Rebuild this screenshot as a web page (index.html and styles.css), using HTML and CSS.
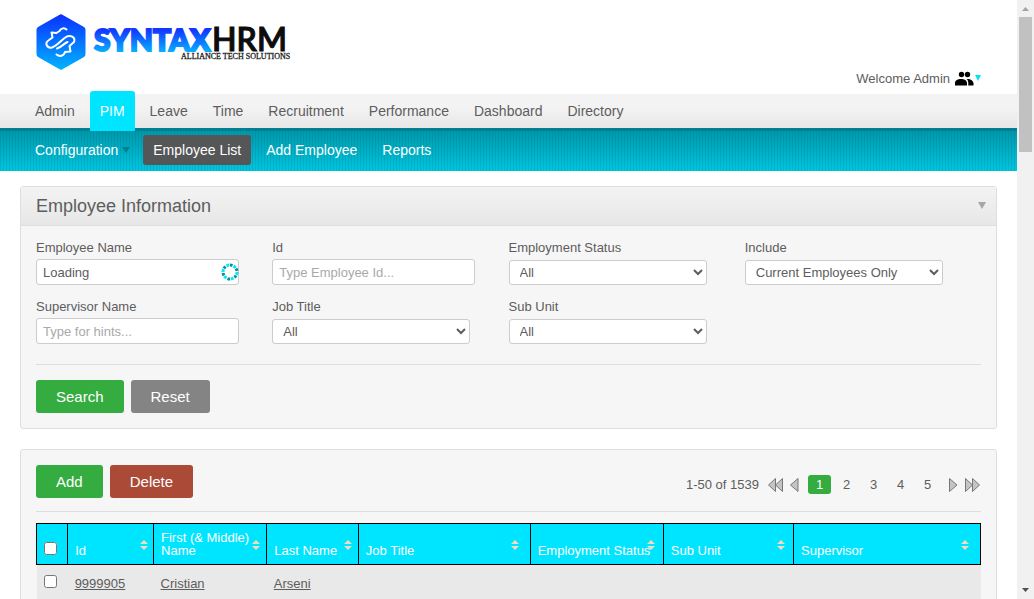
FILE: index.html
```html
<!DOCTYPE html>
<html lang="en">
<head>
<meta charset="utf-8">
<title>SyntaxHRM</title>
<link rel="stylesheet" href="styles.css">
</head>
<body>
<div class="page">
  <header class="branding">
    <svg class="logo" width="260" height="62" viewBox="0 0 260 62" role="img" aria-label="SyntaxHRM">
      <defs>
        <linearGradient id="mark" x1="0" y1="0" x2="0" y2="1"><stop offset="0" stop-color="#0a30ff"/><stop offset="1" stop-color="#00b4ff"/></linearGradient>
        <linearGradient id="word" x1="0" y1="20" x2="0" y2="42" gradientUnits="userSpaceOnUse"><stop offset="0" stop-color="#1238ff"/><stop offset="1" stop-color="#08b0ff"/></linearGradient>
      </defs>
      <path fill="url(#mark)" d="M25 4 48 17Q49.500 18 49.500 20V44Q49.500 46 48 47L26 59.500Q25 60 24 59.500L2 47Q.5 46 .5 44V20Q.5 18 2 17L24 4.500Q25 4 26 4.500Z"/>
      <path fill="none" stroke="#fff" stroke-width="2" stroke-linecap="round" stroke-linejoin="round" d="M30.500 19.500C28.500 17.500 25 18 23.500 21L20.500 23 15.500 22.500 16.500 27.500 13 30C8 33 11 38.500 16 37.500C21 36 26 29.500 30 27C34 24.500 40 27 38 32L33.500 36 34.500 41.500 29 42C28 46 23.500 47 20.500 44.500M21 38.500C25 37.500 28 33.500 31.500 32"/>
      <text class="logo-word" x="58" y="41" fill="url(#word)" stroke="url(#word)">SYNTAX</text>
      <text class="logo-hrm" x="176" y="41">HRM</text>
      <text class="logo-tag" x="145" y="49">ALLIANCE TECH SOLUTIONS</text>
    </svg>
    <button class="welcome" type="button">Welcome Admin
      <svg width="26" height="16" viewBox="0 0 26 16" aria-hidden="true"><circle cx="6.500" cy="3.500" r="2.700"/><circle cx="12.500" cy="3.500" r="2.700"/><path d="M0 14.500V12C0 6.500 12 6.500 12 12V14.500ZM13.300 14.500V12C13.300 10.500 12.800 9 11.500 8 15 7.500 18.500 9.500 18.500 12.500V14.500Z"/><path fill="#00e5ff" d="M20 4H26L23 10Z"/></svg>
    </button>
  </header>
  <nav class="menu">
    <a href="#">Admin</a><a href="#" class="current">PIM</a><a href="#">Leave</a><a href="#">Time</a><a href="#">Recruitment</a><a href="#">Performance</a><a href="#">Dashboard</a><a href="#">Directory</a>
  </nav>
  <nav class="submenu">
    <a href="#" class="has-arrow">Configuration<svg width="8" height="6" aria-hidden="true"><path fill="#007f90" d="M0 0H8L4 6Z"/></svg></a><a href="#" class="selected">Employee List</a><a href="#">Add Employee</a><a href="#">Reports</a>
  </nav>
  <main class="content">
    <section class="panel">
      <div class="panel-head"><h1>Employee Information</h1><button class="toggle" type="button" aria-label="Collapse"><svg width="8" height="7"><path fill="#a6a6a6" d="M0 0H8L4 7Z"/></svg></button></div>
      <form class="panel-body">
        <div class="fields">
          <div class="field"><label for="name">Employee Name</label>
            <div class="loading"><input id="name" type="text" value="Loading">
              <svg class="spinner" width="18" height="18" viewBox="0 0 18 18" fill="none" stroke-width="3" aria-hidden="true"><circle cx="9" cy="9" r="7" stroke="#08e5f5" pathLength="120" stroke-dasharray="8 12"/><circle cx="9" cy="9" r="7" stroke="#078e9c" pathLength="120" stroke-dasharray="7 13" stroke-dashoffset="10"/></svg></div></div>
          <div class="field"><label for="empid">Id</label><input id="empid" type="text" placeholder="Type Employee Id..."></div>
          <div class="field"><label for="status">Employment Status</label><select id="status"><option>All</option></select></div>
          <div class="field"><label for="include">Include</label><select id="include"><option>Current Employees Only</option></select></div>
          <div class="field"><label for="supervisor">Supervisor Name</label><input id="supervisor" type="text" placeholder="Type for hints..."></div>
          <div class="field"><label for="title">Job Title</label><select id="title"><option>All</option></select></div>
          <div class="field"><label for="unit">Sub Unit</label><select id="unit"><option>All</option></select></div>
        </div>
        <div class="actions divided"><button class="btn green" type="button">Search</button><button class="btn gray" type="reset">Reset</button></div>
      </form>
    </section>
    <section class="panel panel-body">
      <div class="toolbar">
        <div class="actions"><button class="btn green" type="button">Add</button><button class="btn red" type="button">Delete</button></div>
        <nav class="paging" aria-label="Pages">
          <span>1-50 of 1539</span>
          <a href="#" class="first" aria-label="First"><svg width="15" height="14"><path d="M7.500 .5V13.500L.5 7ZM14.500 .5V13.500L7.500 7Z"/></svg></a>
          <a href="#" class="prev" aria-label="Previous"><svg width="9" height="14"><path d="M8 .5V13.500L.5 7Z"/></svg></a>
          <a href="#" class="num on">1</a><a href="#" class="num">2</a><a href="#" class="num">3</a><a href="#" class="num">4</a><a href="#" class="num">5</a>
          <a href="#" class="next" aria-label="Next"><svg width="9" height="14"><path d="M.5 .5V13.500L8 7Z"/></svg></a>
          <a href="#" class="last" aria-label="Last"><svg width="15" height="14"><path d="M.5 .5V13.500L7.500 7ZM7.500 .5V13.500L14.500 7Z"/></svg></a>
        </nav>
      </div>
      <table class="list">
        <colgroup><col class="c-check"><col class="c-id"><col class="c-first"><col class="c-last"><col class="c-job"><col class="c-status"><col class="c-unit"><col></colgroup>
        <thead><tr>
          <th class="check"><input type="checkbox" aria-label="Select all"></th>
          <th>Id<svg class="sort" width="8" height="10"><path d="M0 4 4 0 8 4ZM0 6H8L4 10Z"/></svg></th>
          <th>First (&amp; Middle) Name<svg class="sort" width="8" height="10"><path d="M0 4 4 0 8 4ZM0 6H8L4 10Z"/></svg></th>
          <th>Last Name<svg class="sort" width="8" height="10"><path d="M0 4 4 0 8 4ZM0 6H8L4 10Z"/></svg></th>
          <th>Job Title<svg class="sort" width="8" height="10"><path d="M0 4 4 0 8 4ZM0 6H8L4 10Z"/></svg></th>
          <th>Employment Status<svg class="sort" width="8" height="10"><path d="M0 4 4 0 8 4ZM0 6H8L4 10Z"/></svg></th>
          <th>Sub Unit<svg class="sort" width="8" height="10"><path d="M0 4 4 0 8 4ZM0 6H8L4 10Z"/></svg></th>
          <th>Supervisor<svg class="sort" width="8" height="10"><path d="M0 4 4 0 8 4ZM0 6H8L4 10Z"/></svg></th>
        </tr></thead>
        <tbody><tr>
          <td class="check"><input type="checkbox" aria-label="Select Cristian Arseni"></td><td><a href="#">9999905</a></td><td><a href="#">Cristian</a></td><td><a href="#">Arseni</a></td><td></td><td></td><td></td><td></td>
        </tr></tbody>
      </table>
    </section>
  </main>
</div>
<div class="scrollbar" aria-hidden="true">
  <svg width="7" height="4"><path fill="#a3a3a3" d="M0 4 3.500 0 7 4Z"/></svg>
  <div class="thumb"></div>
  <svg width="7" height="4"><path fill="#505050" d="M0 0H7L3.500 4Z"/></svg>
</div>
</body>
</html>
```
FILE: styles.css
```css
* { box-sizing: border-box; }
body {
  margin: 0;
  display: flex;
  height: 100vh;
  overflow: hidden;
  background: #fff;
  color: #5d5d5d;
  font: 13px/16px "Liberation Sans", Arial, sans-serif;
}
button, input, select { font: inherit; color: inherit; }
a { color: inherit; text-decoration: none; }
svg { flex: none; }
.page { flex: 1; min-width: 0; overflow: hidden; }

.branding {
  display: flex;
  justify-content: space-between;
  align-items: flex-end;
  height: 94px;
  padding: 0 36px 7px;
}
.logo { align-self: flex-start; margin-top: 10px; }
.logo-word { font: 900 30px Lato, sans-serif; stroke-width: 2px; }
.logo-hrm { font: 600 32px Lato, sans-serif; fill: #0c0c0c; stroke: #0c0c0c; stroke-width: 1px; }
.logo-tag { font: 8px "Liberation Serif", serif; fill: #222; stroke: #222; stroke-width: 0.3px; }
.welcome {
  display: flex;
  align-items: center;
  gap: 5px;
  padding: 0;
  border: 0;
  background: none;
}
.welcome svg { fill: #000; }

.menu, .submenu { display: flex; gap: 5px; padding: 0 25px; font-size: 14px; }
.menu { height: 34px; background: linear-gradient(#f3f3f3 40%, #e7e7e7); }
.menu a { padding: 9px 10px; }
.menu .current {
  position: relative;
  height: 40px;
  margin-top: -3px;
  padding-top: 12px;
  border-radius: 3px 3px 0 0;
  background: #00e5ff;
  color: #fff;
}
.submenu {
  height: 43px;
  padding-top: 4px;
  border-top: 3px solid #007f90;
  background: repeating-linear-gradient(90deg, rgba(0, 70, 90, .12) 0 1px, transparent 1px 3px), linear-gradient(#0098ab, #00c6df);
  color: #fff;
}
.submenu a { height: 30px; padding: 7px 10px; }
.submenu .has-arrow { display: flex; align-items: center; gap: 4px; padding-right: 8px; }
.submenu .selected { border-radius: 3px; background: #555658; }

.content { padding: 15px 20px; }
.panel {
  margin-bottom: 20px;
  border: 1px solid #dedede;
  border-radius: 3px;
  background: #f6f6f6;
}
.panel-head {
  display: flex;
  justify-content: space-between;
  align-items: center;
  height: 39px;
  padding: 0 10px 0 15px;
  border-bottom: 1px solid #dedede;
  background: linear-gradient(#f3f3f3, #e7e7e7);
}
.panel-head h1 { margin: 0; font-size: 18px; font-weight: normal; }
.toggle { display: flex; padding: 0 0 2px; border: 0; background: none; }
.panel-body { padding: 15px; }
.fields { display: grid; grid-template-columns: repeat(4, 1fr); row-gap: 15px; }
.field { display: flex; flex-direction: column; height: 44px; justify-content: space-between; }
.field label { line-height: 14px; }
.field input, .field select {
  border: 1px solid #ccc;
  border-radius: 3px;
  background-color: #fff;
}
.field input { width: 203px; height: 26px; padding: 0 6px; }
.field select { width: 198px; height: 25px; padding: 0 6px; }
.field input::placeholder { color: #a9a9a9; opacity: 1; }
.loading { position: relative; width: 203px; height: 26px; }
.spinner { position: absolute; right: 0; top: 4px; }
.actions { display: flex; gap: 7px; }
.divided { margin-top: 20px; padding-top: 15px; border-top: 1px solid #dedede; }
.btn { height: 33px; padding: 0 20px; border: 0; border-radius: 3px; color: #fff; font-size: 15px; }
.green { background: #34ac40; }
.gray { background: #848484; }
.red { background: #aa4a37; }

.toolbar {
  display: flex;
  justify-content: space-between;
  margin-bottom: 11px;
  padding-bottom: 13px;
  border-bottom: 1px solid #dedede;
}
.paging { display: flex; align-items: center; height: 33px; padding-top: 6px; }
.paging a { display: flex; }
.paging svg { fill: #c4c4c4; stroke: #777; }
.first { margin: 0 7px 0 9px; }
.prev { margin-right: 9px; }
.paging .num { justify-content: center; width: 23px; margin-right: 4px; line-height: 19px; }
.paging .on { border-radius: 3px; background: #34ac40; color: #fff; }
.next { margin: 0 7px 0 6px; }
.last { margin-right: 1px; }

.list { width: 100%; table-layout: fixed; border-collapse: collapse; }
.c-check { width: 3.300%; }
.c-id { width: 9.100%; }
.c-first { width: 12%; }
.c-last { width: 9.700%; }
.c-job { width: 18.200%; }
.c-status { width: 14.100%; }
.c-unit { width: 13.800%; }
.list th {
  position: relative;
  height: 41px;
  padding: 7px 0 7px 7px;
  border: 1px solid #000;
  background: #00e5ff;
  color: #fff;
  font-weight: normal;
  line-height: 13px;
  text-align: left;
  vertical-align: bottom;
}
.list td { height: 37px; padding: 2px 7px 0; background: #e9e9e9; }
.list a { text-decoration: underline; }
.list .check { padding-left: 7px; padding-right: 0; }
.list .check input { display: block; width: 13px; height: 13px; margin: 0; }
.list th.check { padding-bottom: 9px; }
.list td.check { padding-bottom: 5px; }
.sort { position: absolute; right: 6%; bottom: 14px; fill: #f2dcc0; }

.scrollbar {
  display: flex;
  flex-direction: column;
  align-items: center;
  width: 17px;
  padding: 7px 0;
  background: #f1f1f1;
}
.thumb { width: 13px; height: 135px; margin: 6px 0 auto; background: #c1c1c1; }
```
